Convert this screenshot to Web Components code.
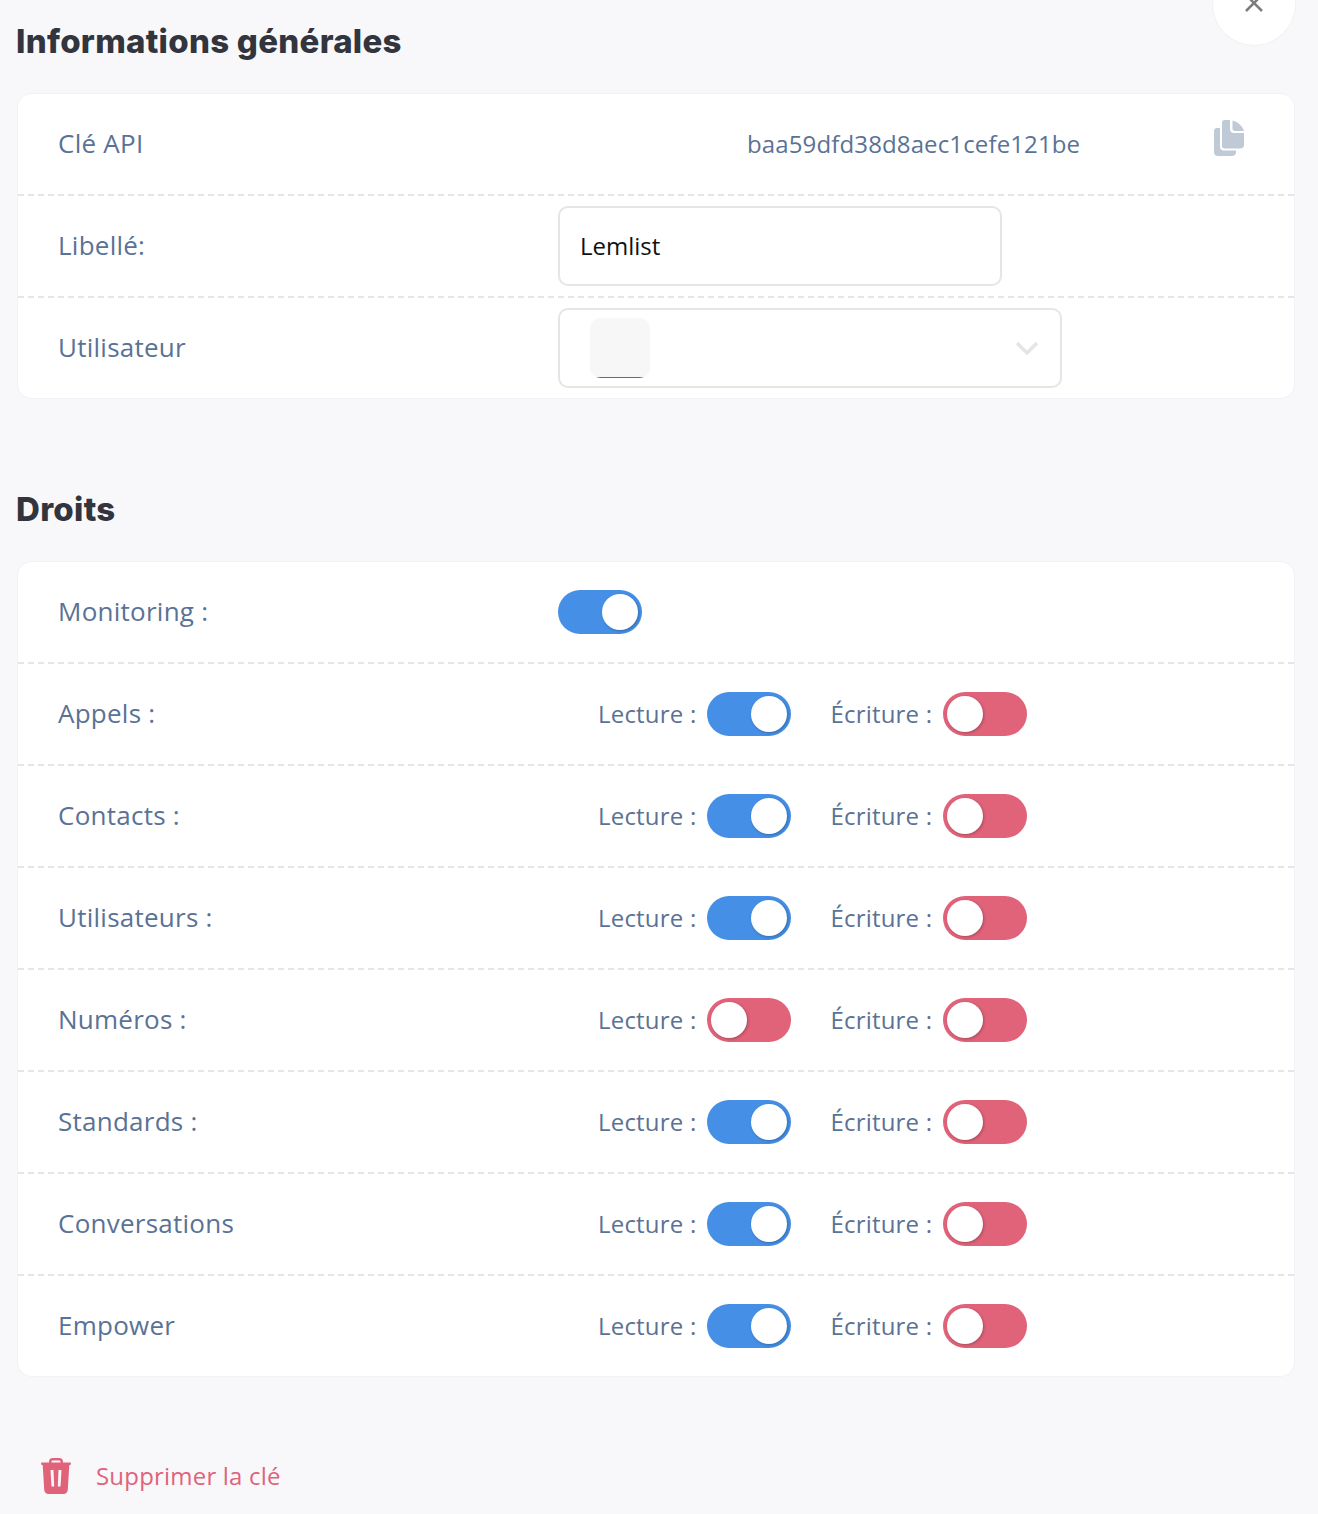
<!DOCTYPE html>
<html lang="fr">
<head>
<meta charset="utf-8">
<title>Informations générales</title>
<style>
    html, body { margin: 0; background: #f8f8fb; }
    body { font-family: "Open Sans", sans-serif; color: #5a7295; }
    #page { position: relative; height: 1514px; overflow: hidden; box-sizing: border-box; padding: 17px 24px 0 18px; }
</style>
</head>
<body>
<div id="page">
    <close-button></close-button>

    <section-title>Informations générales</section-title>
    <panel-card>
        <form-row label="Clé API">
            <api-key value="baa59dfd38d8aec1cefe121be"></api-key>
        </form-row>
        <form-row label="Libellé:">
            <text-field value="Lemlist"></text-field>
        </form-row>
        <form-row label="Utilisateur" last>
            <user-select></user-select>
        </form-row>
    </panel-card>

    <section-title spaced>Droits</section-title>
    <panel-card>
        <form-row label="Monitoring :"><toggle-switch on></toggle-switch></form-row>
        <form-row label="Appels :"><rights-pair read="on"></rights-pair></form-row>
        <form-row label="Contacts :"><rights-pair read="on"></rights-pair></form-row>
        <form-row label="Utilisateurs :"><rights-pair read="on"></rights-pair></form-row>
        <form-row label="Numéros :"><rights-pair></rights-pair></form-row>
        <form-row label="Standards :"><rights-pair read="on"></rights-pair></form-row>
        <form-row label="Conversations"><rights-pair read="on"></rights-pair></form-row>
        <form-row label="Empower" last><rights-pair read="on"></rights-pair></form-row>
    </panel-card>

    <delete-link>Supprimer la clé</delete-link>
</div>

<script>
class SectionTitle extends HTMLElement {
    constructor() {
        super();
        this.attachShadow({ mode: 'open' });
        this.shadowRoot.innerHTML = `
            <style>
                :host{
                    display: block;
                    height: 48px;
                    margin: 0 0 29px -2px;
                    font-family: Inter, sans-serif;
                    font-weight: 800;
                    font-size: 33px;
                    line-height: 48px;
                    letter-spacing: 0.28px;
                    color: #32353d;
                }
                :host([spaced]){ margin-top: 87px; }
            </style>
            <slot></slot>
        `;
    }
}

class PanelCard extends HTMLElement {
    constructor() {
        super();
        this.attachShadow({ mode: 'open' });
        this.shadowRoot.innerHTML = `
            <style>
                :host{
                    display: block;
                    background: #fff;
                    border-radius: 14px;
                    box-shadow: 0 0 0 1px #f1f1f7;
                }
            </style>
            <slot></slot>
        `;
    }
}

class FormRow extends HTMLElement {
    constructor() {
        super();
        this.attachShadow({ mode: 'open' });
        this.shadowRoot.innerHTML = `
            <style>
                :host{
                    display: grid;
                    grid-template-columns: 500px 1fr;
                    align-items: center;
                    height: 100px;
                    padding-left: 40px;
                    border-bottom: 2px dashed #e6e6e6;
                }
                :host([last]){ border-bottom: none; }
                .label{ font-size: 26px; letter-spacing: 0.25px; color: #5a7295; padding-bottom: 2px; }
            </style>
            <div class="label"></div>
            <div><slot></slot></div>
        `;
        this.shadowRoot.querySelector('.label').textContent = this.getAttribute('label');
    }
}

class ApiKey extends HTMLElement {
    constructor() {
        super();
        this.attachShadow({ mode: 'open' });
        this.shadowRoot.innerHTML = `
            <style>
                :host{
                    display: flex;
                    align-items: center;
                    height: 40px;
                }
                span{
                    margin-left: 189px;
                    padding-bottom: 2px;
                    font-size: 24px;
                    letter-spacing: 0.13px;
                    color: #5a7295;
                }
                svg{ margin-left: auto; margin-right: 50px; margin-top: -12px; }
            </style>
            <span></span>
            <svg width="30" height="36" viewBox="0 0 30 36">
                <path fill="#c0c9d6" d="M8 2.500C8 1 9 0 10.500 0H16V9c0 2.500 1.500 4 4 4H30v12c0 2-1.500 3.500-4 3.500H10.500C9 28.500 8 27.500 8 26Z"/>
                <path fill="#c0c9d6" d="M18.500 .5C24 2 28.500 6 30 11H21c-1.500 0-2.500-1-2.500-2.500Z"/>
                <path fill="#c0c9d6" d="M6 8H3C1 8 0 9.500 0 11V32c0 2.500 1.500 4 4 4H18c2 0 4-1.500 4-3.500V30.500H9.500C7.500 30.500 6 29 6 27Z"/>
            </svg>
        `;
        this.shadowRoot.querySelector('span').textContent = this.getAttribute('value');
    }
}

class TextField extends HTMLElement {
    constructor() {
        super();
        this.attachShadow({ mode: 'open' });
        this.shadowRoot.innerHTML = `
            <style>
                :host{
                    display: flex;
                    align-items: center;
                    box-sizing: border-box;
                    width: 444px;
                    height: 80px;
                    padding: 0 0 2px 20px;
                    background: #fff;
                    border: 2px solid #e5e5e5;
                    border-radius: 10px;
                    font-size: 24px;
                    color: #111;
                }
            </style>
            <span></span>
        `;
        this.shadowRoot.querySelector('span').textContent = this.getAttribute('value');
    }
}

class UserSelect extends HTMLElement {
    constructor() {
        super();
        this.attachShadow({ mode: 'open' });
        this.shadowRoot.innerHTML = `
            <style>
                :host{
                    display: flex;
                    align-items: center;
                    box-sizing: border-box;
                    width: 504px;
                    height: 80px;
                    padding: 0 21px 0 30px;
                    background: #fff;
                    border: 2px solid #e5e5e5;
                    border-radius: 10px;
                }
                .avatar{
                    position: relative;
                    width: 60px;
                    height: 60px;
                    background: #f7f7f7;
                    border-radius: 10px;
                    overflow: hidden;
                }
                .avatar::after{
                    content: "";
                    position: absolute;
                    left: 6px;
                    right: 6px;
                    bottom: 0;
                    height: 1px;
                    background: #6b6b6b;
                }
                svg{ margin-left: auto; }
            </style>
            <div class="avatar"></div>
            <svg width="24" height="14" viewBox="0 0 24 14">
                <path d="M2 2l10 10L22 2" fill="none" stroke="#e5e5e5" stroke-width="3.500"/>
            </svg>
        `;
    }
}

class ToggleSwitch extends HTMLElement {
    constructor() {
        super();
        this.attachShadow({ mode: 'open' });
        this.shadowRoot.innerHTML = `
            <style>
                :host{
                    display: block;
                    flex: none;
                    position: relative;
                    width: 84px;
                    height: 44px;
                    border-radius: 22px;
                    background: #e0637a;
                }
                :host([on]){ background: #458fe6; }
                .thumb{
                    position: absolute;
                    top: 4px;
                    left: 4px;
                    width: 36px;
                    height: 36px;
                    border-radius: 50%;
                    background: #fff;
                    box-shadow: 1px 1px 3px rgba(0,0,0,.25);
                }
                :host([on]) .thumb{ left: 44px; }
            </style>
            <div class="thumb"></div>
        `;
    }
}

class RightsPair extends HTMLElement {
    constructor() {
        super();
        this.attachShadow({ mode: 'open' });
        this.shadowRoot.innerHTML = `
            <style>
                :host{
                    display: flex;
                    align-items: center;
                    padding-left: 40px;
                    font-size: 24px;
                    letter-spacing: 0.2px;
                    color: #5a7295;
                }
                .right{ display: flex; align-items: center; gap: 11px; }
                .right span{ padding-bottom: 2px; }
                .right + .right{ margin-left: 39px; }
            </style>
            <div class="right"><span>Lecture :</span><toggle-switch id="read"></toggle-switch></div>
            <div class="right"><span>Écriture :</span><toggle-switch id="write"></toggle-switch></div>
        `;
        if (this.getAttribute('read') === 'on') this.shadowRoot.getElementById('read').setAttribute('on', '');
        if (this.getAttribute('write') === 'on') this.shadowRoot.getElementById('write').setAttribute('on', '');
    }
}

class CloseButton extends HTMLElement {
    constructor() {
        super();
        this.attachShadow({ mode: 'open' });
        this.shadowRoot.innerHTML = `
            <style>
                :host{
                    position: absolute;
                    top: -37px;
                    right: 23px;
                    display: flex;
                    align-items: center;
                    justify-content: center;
                    width: 82px;
                    height: 82px;
                    border-radius: 50%;
                    background: #fff;
                    box-shadow: 0 0 0 1px #f1f1f4;
                }
                svg{ margin-top: -2px; }
            </style>
            <svg width="20" height="20" viewBox="0 0 20 20">
                <path d="M2 2l16 16M18 2L2 18" fill="none" stroke="#7c7c7c" stroke-width="2.500"/>
            </svg>
        `;
    }
}

class DeleteLink extends HTMLElement {
    constructor() {
        super();
        this.attachShadow({ mode: 'open' });
        this.shadowRoot.innerHTML = `
            <style>
                :host{
                    display: flex;
                    align-items: center;
                    gap: 25px;
                    margin-top: 82px;
                    padding-left: 23px;
                    font-size: 24px;
                    letter-spacing: 0.2px;
                    color: #e0637a;
                }
                span{ padding-bottom: 2px; }
            </style>
            <svg width="30" height="36" viewBox="0 0 30 36">
                <path fill="#e0637a" fill-rule="evenodd" d="M8 4.500V3.500C8 1.500 9.500 0 11.500 0h7C20.500 0 22 1.500 22 3.500v1h6.500c1 0 1.500.6 1.500 1.200S29.500 7 28.500 7h-27C.5 7 0 6.300 0 5.700S.5 4.500 1.500 4.500ZM10.500 4.500h9V3.600c0-.7-.5-1.100-1.100-1.100h-6.800c-.6 0-1.100.4-1.100 1.100Z"/>
                <path fill="#e0637a" fill-rule="evenodd" d="M1.700 7H28.300L26.800 31.500c-.2 2.800-1.800 4.500-4.300 4.500H7.500c-2.500 0-4.100-1.700-4.300-4.500ZM9.500 12l1 16.500h2.700L12.500 12ZM17.500 12l-.7 16.500h2.700l1-16.500Z"/>
            </svg>
            <span><slot></slot></span>
        `;
    }
}

window.customElements.define('section-title', SectionTitle);
window.customElements.define('panel-card', PanelCard);
window.customElements.define('form-row', FormRow);
window.customElements.define('api-key', ApiKey);
window.customElements.define('text-field', TextField);
window.customElements.define('user-select', UserSelect);
window.customElements.define('toggle-switch', ToggleSwitch);
window.customElements.define('rights-pair', RightsPair);
window.customElements.define('close-button', CloseButton);
window.customElements.define('delete-link', DeleteLink);
</script>
</body>
</html>
